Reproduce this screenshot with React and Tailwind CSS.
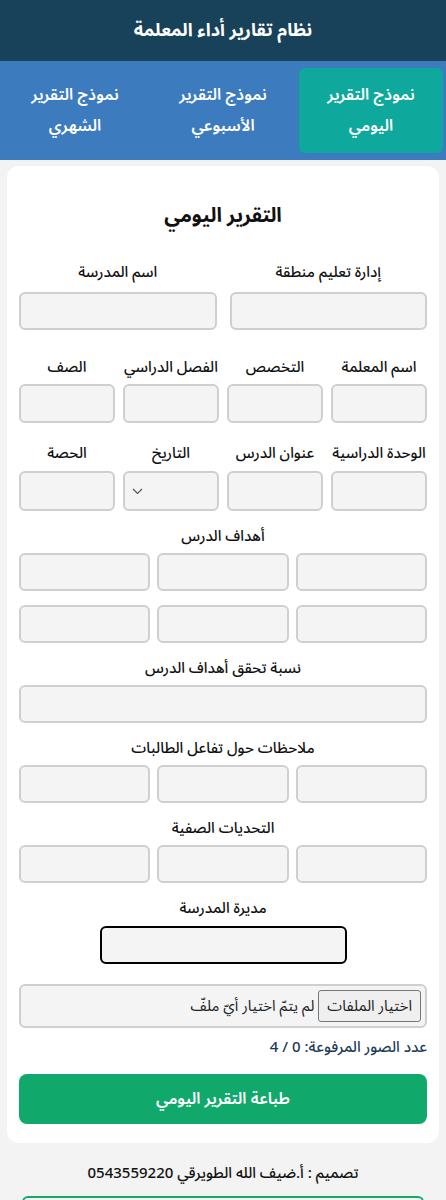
import React from "react";

const Box = ({ className = "" }) => (
  <div className={`h-[38px] rounded-[6px] border-2 border-[#cfcfcf] bg-[#f4f4f4] ${className}`} />
);

const Label = ({ children, className = "" }) => (
  <div className={`h-[24px] text-[15px] leading-[24px] font-medium text-[#111] text-center ${className}`}>{children}</div>
);

const Tab = ({ l1, l2, active }) => (
  <div className={`rounded-[6px] flex flex-col items-center justify-center text-center text-white text-[16px] font-semibold ${active ? "bg-[#0fa89d]" : ""}`}>
    <div className="leading-[28px]">{l1}</div>
    <div className="leading-[28px] mt-[3px]">{l2}</div>
  </div>
);

export default function App() {
  return (
    <div dir="rtl" className="w-[446px] min-h-[1200px] bg-[#f3f3f3]" style={{ fontFamily: '"Noto Sans Arabic", "Noto Sans", "DejaVu Sans", sans-serif' }}>
      <header className="h-[61px] bg-[#184259] flex items-center justify-center">
        <h1 className="text-[18px] font-bold text-white">نظام تقارير أداء المعلمة</h1>
      </header>
      <nav className="h-[99px] bg-[#3c7bbe] grid grid-cols-3 gap-[4px] px-[3px] py-[7px]">
        <Tab l1="نموذج التقرير" l2="اليومي" active />
        <Tab l1="نموذج التقرير" l2="الأسبوعي" />
        <Tab l1="نموذج التقرير" l2="الشهري" />
      </nav>
      <main className="px-[7px] pt-[6px]">
        <section className="bg-white rounded-[12px] px-[12px] pt-[32px] pb-[19px]">
          <h2 className="h-[36px] leading-[36px] text-center text-[20px] font-bold text-[#111] mb-[26px]">التقرير اليومي</h2>

          <div className="grid grid-cols-2 gap-x-[13px]">
            <div><Label className="mb-[8px]">إدارة تعليم منطقة</Label><Box /></div>
            <div><Label className="mb-[8px]">اسم المدرسة</Label><Box /></div>
          </div>

          <div className="grid grid-cols-4 gap-x-[8px] mt-[25px]">
            <div><Label className="mb-[5px]">اسم المعلمة</Label><Box className="h-[39px]" /></div>
            <div><Label className="mb-[5px]">التخصص</Label><Box className="h-[39px]" /></div>
            <div><Label className="mb-[5px]">الفصل الدراسي</Label><Box className="h-[39px]" /></div>
            <div><Label className="mb-[5px]">الصف</Label><Box className="h-[39px]" /></div>
          </div>

          <div className="grid grid-cols-4 gap-x-[8px] mt-[18px]">
            <div><Label className="mb-[6px]">الوحدة الدراسية</Label><Box className="h-[40px]" /></div>
            <div><Label className="mb-[6px]">عنوان الدرس</Label><Box className="h-[40px]" /></div>
            <div>
              <Label className="mb-[6px]">التاريخ</Label>
              <div className="h-[40px] rounded-[6px] border-2 border-[#cfcfcf] bg-[#f4f4f4] flex items-center justify-end pl-[7px]">
                <svg width="11" height="7" viewBox="0 0 11 7" fill="none" stroke="#555" strokeWidth="1.2"><path d="M1 1l4.5 4.5L10 1" /></svg>
              </div>
            </div>
            <div><Label className="mb-[6px]">الحصة</Label><Box className="h-[40px]" /></div>
          </div>

          <Label className="mt-[13px] mb-[5px]">أهداف الدرس</Label>
          <div className="grid grid-cols-3 gap-x-[7px] gap-y-[14px]">
            <Box /><Box /><Box /><Box /><Box /><Box />
          </div>

          <Label className="mt-[13px] mb-[5px]">نسبة تحقق أهداف الدرس</Label>
          <Box />

          <Label className="mt-[13px] mb-[5px]">ملاحظات حول تفاعل الطالبات</Label>
          <div className="grid grid-cols-3 gap-x-[7px]">
            <Box /><Box /><Box />
          </div>

          <Label className="mt-[13px] mb-[5px]">التحديات الصفية</Label>
          <div className="grid grid-cols-3 gap-x-[7px]">
            <Box /><Box /><Box />
          </div>

          <Label className="mt-[13px] mb-[6px]">مديرة المدرسة</Label>
          <div className="mx-auto w-[247px] h-[38px] rounded-[6px] border-2 border-black bg-[#f4f4f4]" />

          <div className="mt-[20px] h-[44px] rounded-[6px] border-2 border-[#cfcfcf] bg-[#f4f4f4] flex items-center gap-[4px] pr-[4px]">
            <div className="h-[32px] px-[8px] rounded-[3px] border border-[#767676] bg-[#efefef] text-[15px] text-[#222] flex items-center">اختيار الملفات</div>
            <div className="text-[15px] text-[#222]">لم يتمّ اختيار أيّ ملفّ</div>
          </div>

          <div className="mt-[9px] h-[20px] leading-[20px] text-[15px] text-[#1d3b57] font-medium">عدد الصور المرفوعة: 0 / 4</div>

          <button className="mt-[17px] w-full h-[50px] rounded-[8px] bg-[#10a96b] text-white text-[16px] font-semibold">طباعة التقرير اليومي</button>
        </section>

        <div className="h-[24px] mt-[18px] leading-[24px] text-center text-[15px] font-medium text-[#111]">تصميم : أ.ضيف الله الطويرقي 0543559220</div>
        <div className="mt-[11px] mx-[15px] h-[20px] rounded-t-[6px] border-t-2 border-x-2 border-[#10a96b]" />
      </main>
    </div>
  );
}
